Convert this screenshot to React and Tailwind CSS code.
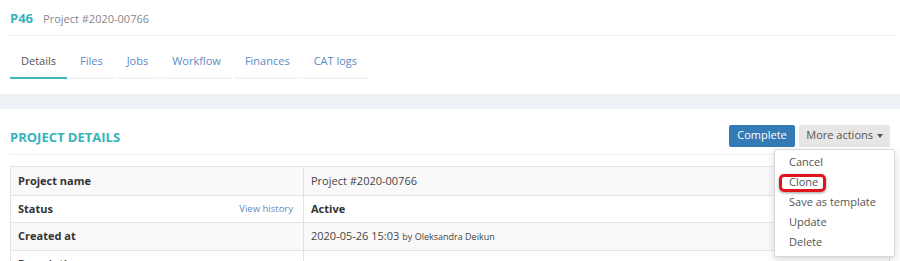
import React from 'react';

const tabs = ['Details', 'Files', 'Jobs', 'Workflow', 'Finances', 'CAT logs'];

const rows = [
  { label: 'Project name', value: 'Project #2020-00766' },
  { label: 'Status', value: 'Active', bold: true, history: true },
  { label: 'Created at', value: '2020-05-26 15:03', by: 'Oleksandra Deikun' },
  { label: 'Description', value: '' },
];

const actions = ['Cancel', 'Clone', 'Save as template', 'Update', 'Delete'];

const App = () => {
  return (
    <div className="w-[900px] h-[261px] overflow-hidden bg-white text-[#333] font-['Open_Sans',sans-serif]">
      {/* Header */}
      <div className="pl-[10px] pr-[5px]">
        <div className="flex items-baseline gap-[10px] pt-[10px] pb-[8px] border-b border-[#f0f0f0] leading-[16px]">
          <span className="text-[13px] font-bold text-[#36b3bd]">P46</span>
          <span className="text-[11px] text-[#888]">Project #2020-00766</span>
        </div>

        {/* Tabs */}
        <div className="flex mt-[10px] pb-[15px]">
          {tabs.map((tab, i) => (
            <div
              key={tab}
              className={`h-[33px] px-[11px] mr-[2px] flex items-center text-[11px] border-b-2 ${
                i === 0 ? 'border-[#3fb8bd] text-[#555]' : 'border-[#f3f3f3] text-[#5b8bc6]'
              }`}
            >
              {tab}
            </div>
          ))}
        </div>
      </div>

      {/* Gray band */}
      <div className="h-[15px] bg-[#eef1f5]" />

      {/* Project details */}
      <div className="px-[10px]">
        <div className="flex items-center justify-between h-[46px] pt-[12px] border-b border-[#f0f0f0]">
          <h2 className="text-[13px] font-bold text-[#36b3bd] uppercase">Project details</h2>
          <div className="relative flex gap-[4px] text-[11px] mt-[-4px]">
            <button className="h-[22px] px-[8.5px] rounded-[2px] bg-[#337ab7] text-white">Complete</button>
            <button className="h-[22px] px-[7px] rounded-[2px] bg-[#e6e6e6] text-[#555] flex items-center gap-[4px]">
              More actions
              <span className="w-0 h-0 border-x-[3px] border-x-transparent border-t-[4px] border-t-[#555]" />
            </button>

            {/* Dropdown */}
            <div className="absolute right-[-5px] top-[24px] w-[121px] py-[3px] bg-white border border-[#d9d9d9] rounded-[2px] shadow-[0_3px_8px_rgba(0,0,0,0.15)] z-10">
              {actions.map((a) => (
                <div key={a} className="relative h-[20px] px-[14px] flex items-center text-[11px] text-[#555]">
                  {a}
                  {a === 'Clone' && (
                    <span className="absolute left-[4px] top-[1px] w-[47px] h-[18px] rounded-[5px] border-[3px] border-[#e2141b] shadow-[0_1px_3px_rgba(0,0,0,0.4)]" />
                  )}
                </div>
              ))}
            </div>
          </div>
        </div>

        {/* Table */}
        <div className="mt-[11px] border border-[#e3e3e3]">
          {rows.map((r, i) => (
            <div
              key={r.label}
              className={`flex h-[27.5px] ${i > 0 ? 'border-t border-[#e3e3e3]' : ''} ${
                i % 2 === 0 ? 'bg-[#f9f9f9]' : 'bg-white'
              }`}
            >
              <div className="w-[293px] shrink-0 flex items-center justify-between px-[7px] pr-[10px] border-r border-[#e3e3e3] text-[11px] font-bold">
                <span>{r.label}</span>
                {r.history && <span className="text-[9.5px] font-normal text-[#5b8bc6]">View history</span>}
              </div>
              <div className="flex-1 flex items-center px-[7px] text-[11px] text-[#444]">
                <span className={r.bold ? 'font-bold text-[#333]' : ''}>{r.value}</span>
                {r.by && <span className="ml-[3px] text-[9px] text-[#444]">by {r.by}</span>}
              </div>
            </div>
          ))}
        </div>
      </div>
    </div>
  );
};

export default App;
